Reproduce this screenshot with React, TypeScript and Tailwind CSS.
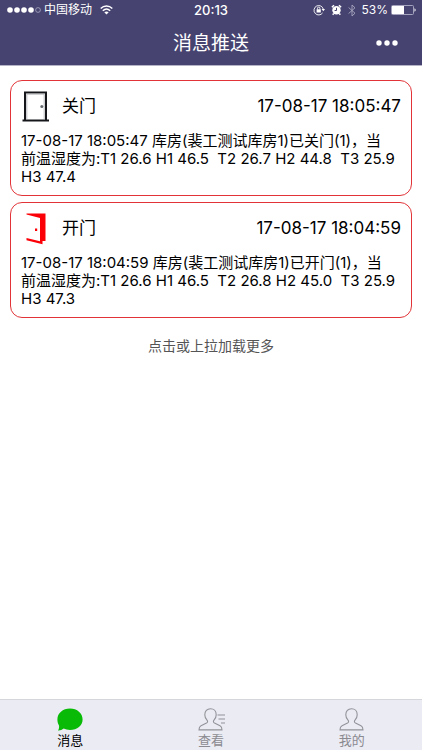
import type { ReactNode } from 'react'

const messages = [
    {
        id: 1,
        open: false,
        title: '关门',
        time: '17-08-17 18:05:47',
        text: '17-08-17 18:05:47 库房(裴工测试库房1)已关门(1)，当\n前温湿度为:T1 26.6 H1 46.5  T2 26.7 H2 44.8  T3 25.9 H3 47.4',
    },
    {
        id: 2,
        open: true,
        title: '开门',
        time: '17-08-17 18:04:59',
        text: '17-08-17 18:04:59 库房(裴工测试库房1)已开门(1)，当\n前温湿度为:T1 26.6 H1 46.5  T2 26.8 H2 45.0  T3 25.9 H3 47.3',
    },
]

function StatusBar() {
    return (
        <div className="grid grid-cols-3 items-center h-5 px-1.5 text-[13px] leading-5">
            <div className="flex items-center">
                <svg width="36" height="8" viewBox="0 0 36 8" fill="#fff">
                    <circle cx="4" cy="4" r="2.8" />
                    <circle cx="11" cy="4" r="2.8" />
                    <circle cx="18" cy="4" r="2.8" />
                    <circle cx="25" cy="4" r="2.8" />
                    <circle cx="32" cy="4" r="2.4" fill="none" stroke="#b9b7cf" strokeWidth="0.7" />
                </svg>
                <span className="ml-0.5 text-xs leading-5 whitespace-nowrap">中国移动</span>
                <svg className="ml-2 shrink-0" width="13" height="10" viewBox="0 0 13 10" fill="none" stroke="#fff" strokeWidth="1.5">
                    <path d="M0.7 3.5C4 0.2 9 0.2 12.3 3.5" />
                    <path d="M2.8 5.8C5 3.7 8 3.7 10.2 5.8" />
                    <path d="M4.3 7.3C5.6 6.2 7.4 6.2 8.7 7.3L6.5 9.6Z" fill="#fff" stroke="none" />
                </svg>
            </div>
            <div className="text-center font-medium">20:13</div>
            <div className="flex items-center justify-end">
                <svg className="shrink-0" width="12" height="12" viewBox="0 0 12 12" fill="none" stroke="#fff" strokeWidth="0.9">
                    <path d="M9.6 8.9A4.7 4.7 0 1 1 10.3 5.2" />
                    <path d="M8.6 5.1H12L10.3 7.2Z" fill="#fff" stroke="none" />
                    <rect x="3.6" y="5.3" width="4.2" height="3.2" fill="#fff" stroke="none" />
                    <path d="M4.5 5.5V4.3a1.2 1.2 0 0 1 2.4 0V5.5" />
                </svg>
                <svg className="ml-1.5 shrink-0" width="11" height="12" viewBox="0 0 11 12" fill="none">
                    <circle cx="5.5" cy="6.2" r="4.2" fill="#fff" />
                    <path d="M0.9 3.2L3 1.2M10.1 3.2L8 1.2M2.7 9.6L1.7 10.8M8.3 9.6L9.3 10.8" stroke="#fff" strokeWidth="1.5" />
                    <path d="M5.5 3.8V6.5H3.6" stroke="#464370" strokeWidth="1" />
                </svg>
                <svg className="ml-1.5 shrink-0" width="8" height="13" viewBox="0 0 8 13" fill="none" stroke="#a9a7c0" strokeWidth="0.9">
                    <path d="M0.6 3.5L7 9.2L4 12V1L7 3.8L0.6 9.5" />
                </svg>
                <span className="ml-1.5 text-xs leading-5">53%</span>
                <svg className="ml-[3px] shrink-0" width="25" height="10" viewBox="0 0 25 10" fill="none">
                    <rect x="0.5" y="0.5" width="22" height="9" rx="1" stroke="#a5a3bd" />
                    <rect x="1" y="1" width="12" height="8" fill="#fff" />
                    <path d="M23.5 3.3C25 3.8 25 6.2 23.5 6.7Z" fill="#fff" />
                </svg>
            </div>
        </div>
    )
}

function NavBar() {
    return (
        <div className="grid grid-cols-[1fr_auto_1fr] items-center h-[45px] px-5">
            <h1 className="col-start-2 pt-1 text-[19px]">消息推送</h1>
            <button className="justify-self-end p-1" aria-label="更多">
                <svg width="22" height="6" viewBox="0 0 22 6" fill="#fff">
                    <circle cx="3" cy="3" r="2.7" />
                    <circle cx="11" cy="3" r="2.7" />
                    <circle cx="19" cy="3" r="2.7" />
                </svg>
            </button>
        </div>
    )
}

function DoorIcon({ open }: { open: boolean }) {
    if (open) {
        return (
            <svg width="28" height="32" viewBox="0 0 28 32" fill="#fb0007">
                <path d="M5.5 0.5H24.5V28H21.5V31.2L5.5 27.3V25L19 28.2V5L5.5 1.6Z" />
                <rect x="14" y="15.5" width="2.2" height="2.5" />
            </svg>
        )
    }
    return (
        <svg width="28" height="32" viewBox="0 0 28 32" fill="none">
            <path d="M4 29V1.5H25V29" stroke="#14161a" strokeWidth="2" />
            <path d="M1.5 29.5H28" stroke="#14161a" strokeWidth="2" />
            <path d="M5.8 28V3.2H23.2V28" stroke="#a8abb0" strokeWidth="0.8" />
            <circle cx="20.8" cy="15.500" r="1.500" fill="#66696e" />
        </svg>
    )
}

function BubbleIcon() {
    return (
        <svg width="28" height="24" viewBox="0 0 28 24" fill="#09bb07">
            <path d="M14 0.5C21.2 0.5 26.6 5.2 26.6 11.5S21.2 22 14 22C11.6 22 9.5 21.5 7.7 20.6C6 22 3.9 22.7 2 22.5C2.9 21.4 3.3 19.6 3 17.5C1.9 15.7 1.4 13.7 1.4 11.5C1.4 5.2 6.8 0.5 14 0.5Z" />
        </svg>
    )
}

function PersonIcon({ lines }: { lines?: boolean }) {
    return (
        <svg width="28" height="24" viewBox="0 0 28 24" fill="none" stroke="#929299" strokeWidth="1.1">
            <path d="M13.5 0.8C17 0.8 19.2 3.3 19.2 6.7C19.2 8.8 18.5 10.6 17 12.1C16.1 13.2 16.2 14.4 17.5 15.1L23 17.8C24.6 18.6 25 19.6 25 21.9H2C2 19.6 2.4 18.6 4 17.8L9.5 15.1C10.8 14.4 10.9 13.2 10 12.1C8.5 10.6 7.8 8.8 7.8 6.7C7.8 3.3 10 0.8 13.5 0.8Z" />
            {lines && <path d="M20.5 7H28M21.5 11H28M24 15H28" />}
        </svg>
    )
}

function Tab({ label, active, children }: { label: string; active?: boolean; children: ReactNode }) {
    return (
        <button className={`flex flex-1 flex-col items-center pt-2 text-[13px] leading-[17px] ${active ? 'text-black' : 'text-[#8a8a90]'}`}>
            {children}
            <span>{label}</span>
        </button>
    )
}

function App() {
    return (
        <div className="flex flex-col min-h-screen bg-white text-black font-[Inter,'Noto_Sans_CJK_SC',sans-serif]">
            <header className="bg-[#464370] text-white border-b border-[#b5b4c6]">
                <StatusBar />
                <NavBar />
            </header>
            <main className="flex-1 px-[10px] pt-[14px]">
                <div className="flex flex-col gap-1.5">
                    {messages.map((msg) => (
                        <article key={msg.id} className="border border-[#e23438] rounded-xl px-[10px] pt-2 pb-[9px]">
                            <div className="flex items-center h-9 mb-[7px]">
                                <DoorIcon open={msg.open} />
                                <h2 className="ml-[13px] text-[17px]">{msg.title}</h2>
                                <time className="ml-auto text-[17px]">{msg.time}</time>
                            </div>
                            <p className="text-[15px] leading-[18px] whitespace-pre-wrap">{msg.text}</p>
                        </article>
                    ))}
                </div>
                <button className="block mx-auto mt-4 text-sm leading-6 text-[#555]">点击或上拉加载更多</button>
            </main>
            <nav className="flex h-[51px] bg-[#ebebf3] border-t border-[#d5d5dc]">
                <Tab label="消息" active>
                    <BubbleIcon />
                </Tab>
                <Tab label="查看">
                    <PersonIcon lines />
                </Tab>
                <Tab label="我的">
                    <PersonIcon />
                </Tab>
            </nav>
        </div>
    )
}

export default App
